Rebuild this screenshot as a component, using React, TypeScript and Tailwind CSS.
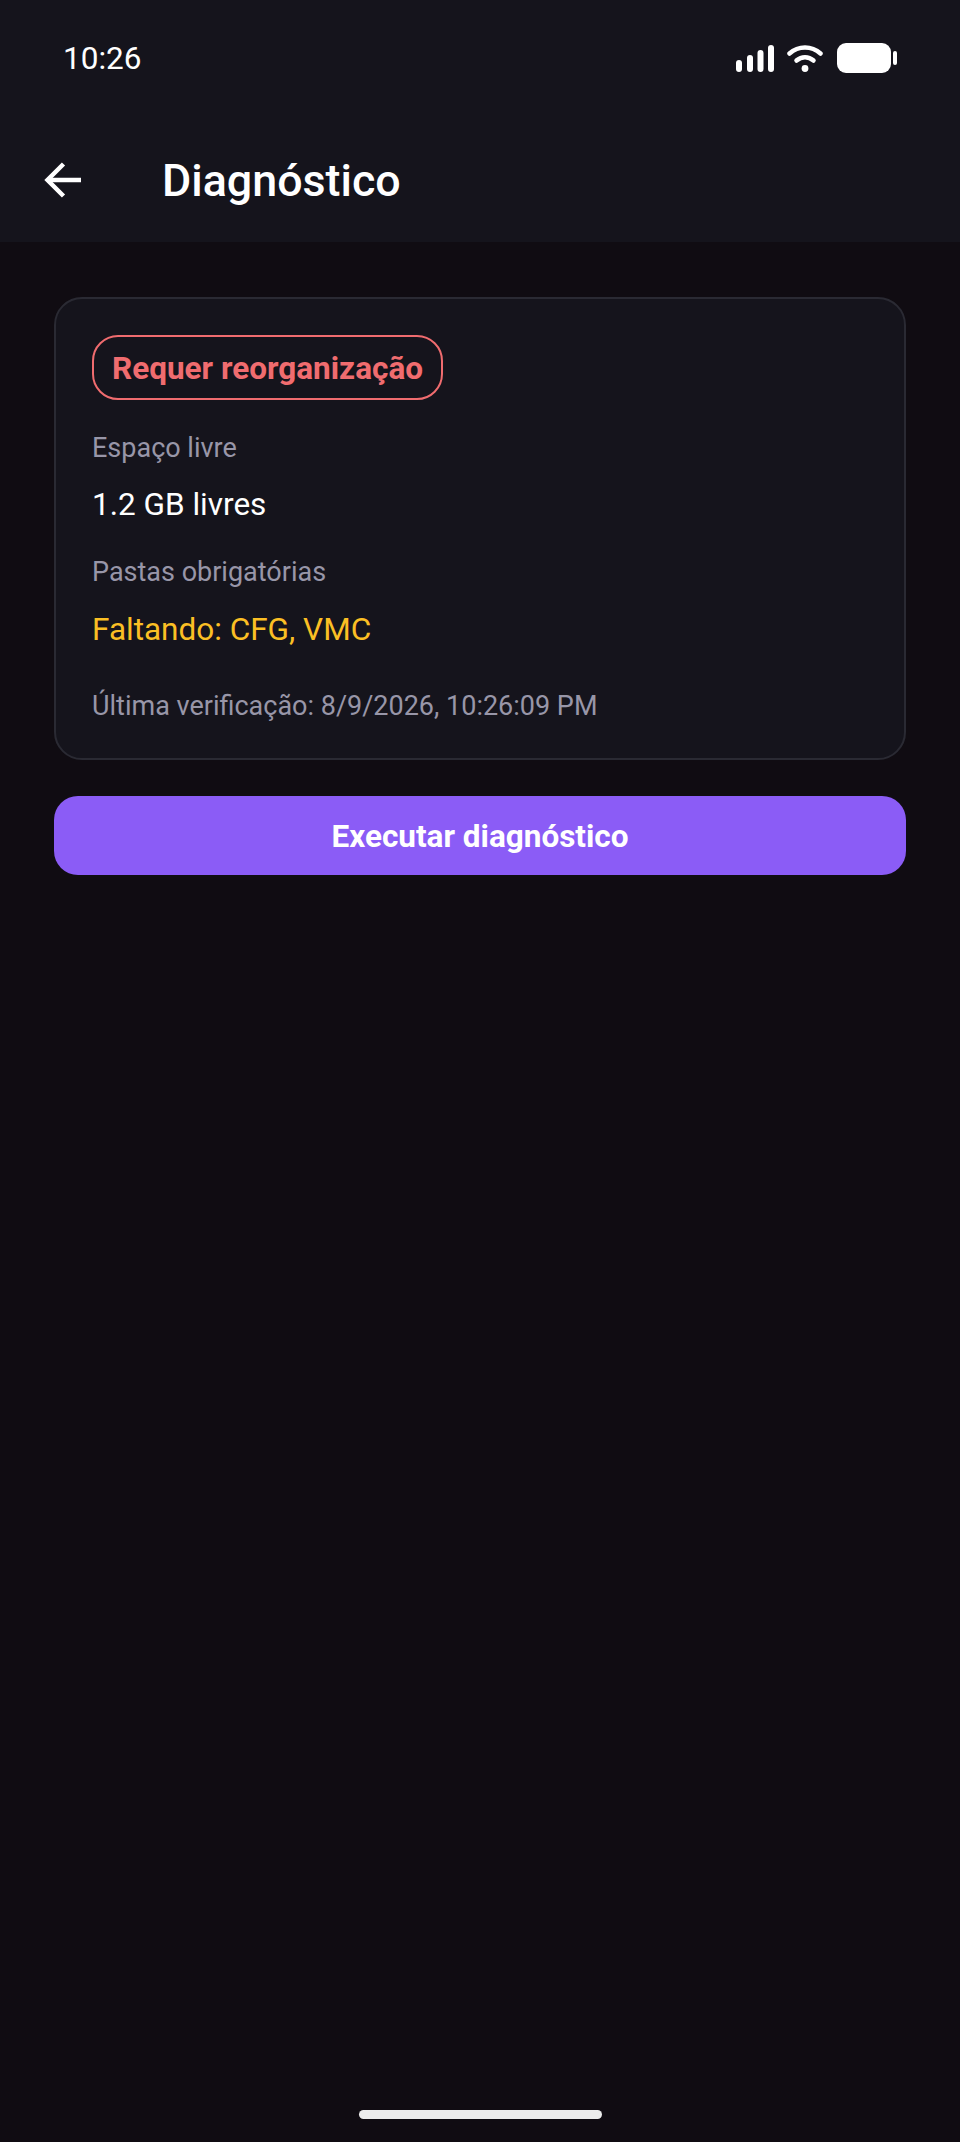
const App = () => {
  return (
    <div className="min-h-[2142px] flex flex-col bg-[#100c12] font-['Roboto',sans-serif] text-white">
      <header className="h-[242px] bg-[#15141c] flex flex-col">
        <div className="h-[116px] pl-[63px] pr-[63px] flex items-center justify-between">
          <span className="text-[31.5px] leading-none pt-[1px]">10:26</span>
          <div className="flex items-center gap-[13px]">
            <svg width="38" height="27" viewBox="0 0 38 27" fill="#fff">
              <rect x="0" y="15" width="6" height="12" rx="3" />
              <rect x="11" y="10" width="6" height="17" rx="3" />
              <rect x="21.5" y="5" width="6" height="22" rx="3" />
              <rect x="32" y="0" width="6" height="27" rx="3" />
            </svg>
            <svg width="36" height="27" viewBox="0 0 36 27" fill="none" stroke="#fff" strokeWidth="4.5" strokeLinecap="round">
              <path d="M2.5 8.5C11.5.5 24.5.5 33.5 8.5" />
              <path d="M9.5 15.5C14.5 11 21.5 11 26.5 15.5" />
              <circle cx="18" cy="23.5" r="3.4" fill="#fff" stroke="none" />
            </svg>
            <svg width="60" height="30" viewBox="0 0 60 30" fill="#fff" className="ml-[1px]">
              <rect x="0" y="0" width="54" height="30" rx="9" />
              <rect x="56" y="8" width="4" height="14" rx="2" />
            </svg>
          </div>
        </div>
        <div className="flex items-center h-[62px] mt-[34px] pl-[44px]">
          <svg width="38" height="36" viewBox="0 0 38 36" fill="none" stroke="#fff" strokeWidth="4.5" className="mb-[3px]">
            <path d="M37 18H3" />
            <path d="M19.5 2 3.5 18l16 16" />
          </svg>
          <h1 className="ml-[80px] text-[44.8px] leading-none font-medium">Diagnóstico</h1>
        </div>
      </header>

      <main className="flex-1 flex flex-col px-[54px] pt-[55px]">
        <section className="h-[463px] rounded-[28px] border-2 border-[#2a2a33] bg-[#15141c] pl-[36px] pt-[36px] flex flex-col items-start">
          <span className="h-[65px] rounded-[26px] border-2 border-[#f06c6f] px-[18px] pt-[3px] flex items-center text-[31.5px] font-bold text-[#f06c6f]">
            Requer reorganização
          </span>
          <p className="mt-[31px] text-[27px] leading-[34px] text-[#9896a8]">Espaço livre</p>
          <p className="mt-[21px] text-[31.5px] leading-[38px]">1.2 GB livres</p>
          <p className="mt-[31px] text-[27px] leading-[34px] text-[#9896a8]">Pastas obrigatórias</p>
          <p className="mt-[22px] text-[31.5px] leading-[38px] text-[#fbbf24]">Faltando: CFG, VMC</p>
          <p className="mt-[40px] text-[27px] leading-[34px] text-[#9896a8]">Última verificação: 8/9/2026, 10:26:09 PM</p>
        </section>
        <button className="mt-[36px] h-[79px] rounded-[24px] bg-[#8b5cf6] pt-[2px] text-[31.5px] font-bold text-white">
          Executar diagnóstico
        </button>
        <div className="mt-auto mb-[23px] mx-auto h-[9px] w-[243px] rounded-full bg-[#ececec]" />
      </main>
    </div>
  )
}

export default App
